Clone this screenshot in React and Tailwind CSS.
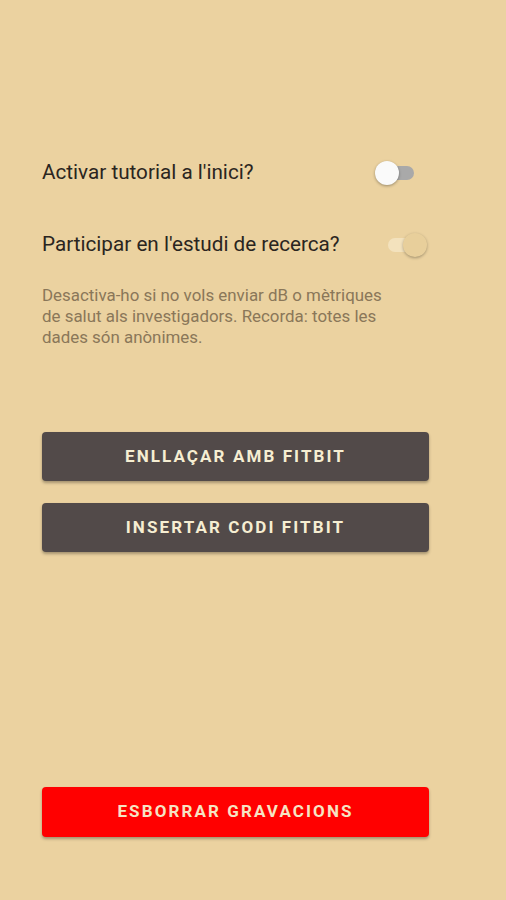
export default function App() {
  return (
    <div className="w-[506px] h-[900px] bg-[#ebd2a0] flex flex-col pl-[42px] pr-[77px]" style={{ fontFamily: "Roboto, 'Liberation Sans', sans-serif" }}>
      <div className="h-[160px]" />
      <div className="flex items-center justify-between h-[26px] pr-[15px]">
        <span className="text-[20.7px] text-[#2a2520]">Activar tutorial a l'inici?</span>
        <div className="relative w-[36px] h-[14px] rounded-full bg-[#a9a9a9] ml-auto">
          <div className="absolute left-[-3px] top-[-5px] w-[24px] h-[24px] rounded-full bg-[#fafafa] shadow-[0_1px_3px_rgba(0,0,0,0.35)]" />
        </div>
      </div>
      <div className="h-[46px]" />
      <div className="flex items-center justify-between h-[26px] pr-[5px]">
        <span className="text-[20.7px] text-[#2a2520]">Participar en l'estudi de recerca?</span>
        <div className="relative w-[36px] h-[14px] rounded-full bg-[#f3e2bd]">
          <div className="absolute right-[-3px] top-[-5px] w-[24px] h-[24px] rounded-full bg-[#e8cf9b] shadow-[0_1px_3px_rgba(0,0,0,0.3)]" />
        </div>
      </div>
      <div className="h-[27px]" />
      <p className="text-[16.9px] leading-[21px] text-[#8a7759] w-[360px]">
        Desactiva-ho si no vols enviar dB o mètriques de salut als investigadors. Recorda: totes les dades són anònimes.
      </p>
      <div className="h-[84px]" />
      <button className="h-[49px] w-full rounded-[4px] bg-[#524a49] text-[#f6eed2] text-[17px] font-bold tracking-[2.1px] shadow-[0_2px_3px_rgba(0,0,0,0.3)]">
        ENLLAÇAR AMB FITBIT
      </button>
      <div className="h-[22px]" />
      <button className="h-[49px] w-full rounded-[4px] bg-[#524a49] text-[#f6eed2] text-[17px] font-bold tracking-[2.1px] shadow-[0_2px_3px_rgba(0,0,0,0.3)]">
        INSERTAR CODI FITBIT
      </button>
      <div className="h-[235px]" />
      <button className="h-[50px] w-full rounded-[4px] bg-[#ff0000] text-[#f6e4c4] text-[17px] font-bold tracking-[2.1px] shadow-[0_2px_3px_rgba(0,0,0,0.3)]">
        ESBORRAR GRAVACIONS
      </button>
    </div>
  );
}
